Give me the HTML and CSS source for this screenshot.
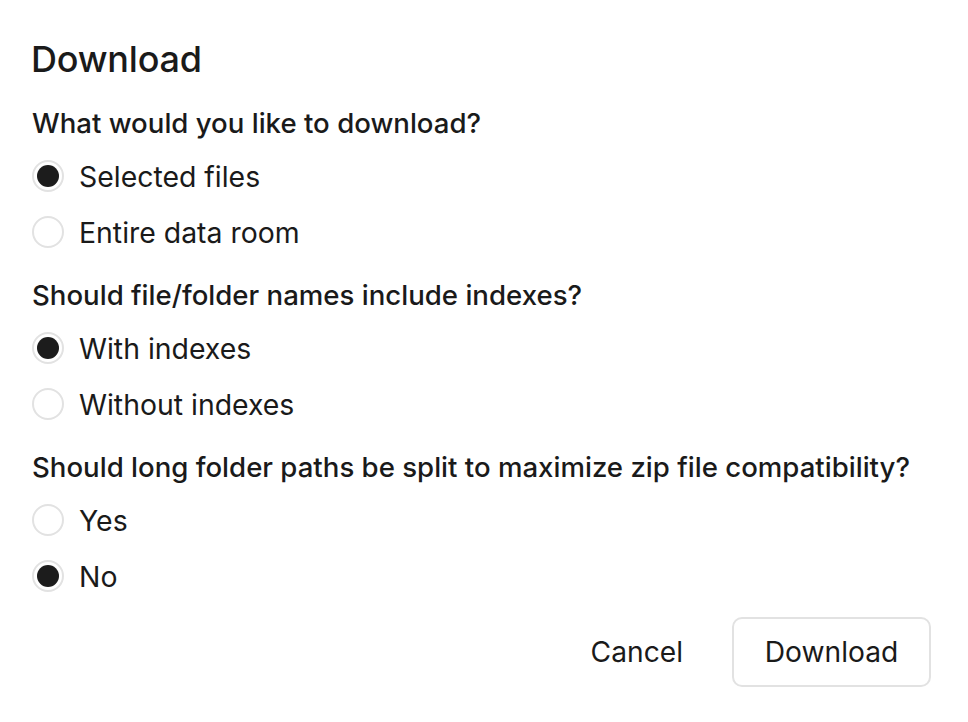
FILE: index.html
```html
<!DOCTYPE html>
<html lang="en">
<head>
<meta charset="utf-8">
<title>Download</title>
<link rel="stylesheet" href="styles.css">
</head>
<body>
<div class="dialog">
  <h1 class="title">Download</h1>
  <div class="group">
    <div class="question">What would you like to download?</div>
    <label class="option"><span class="radio checked"></span><span>Selected files</span></label>
    <label class="option"><span class="radio"></span><span>Entire data room</span></label>
  </div>
  <div class="group">
    <div class="question">Should file/folder names include indexes?</div>
    <label class="option"><span class="radio checked"></span><span>With indexes</span></label>
    <label class="option"><span class="radio"></span><span>Without indexes</span></label>
  </div>
  <div class="group">
    <div class="question">Should long folder paths be split to maximize zip file compatibility?</div>
    <label class="option"><span class="radio"></span><span>Yes</span></label>
    <label class="option"><span class="radio checked"></span><span>No</span></label>
  </div>
  <div class="actions">
    <button class="btn btn-text">Cancel</button>
    <button class="btn btn-outline">Download</button>
  </div>
</div>
</body>
</html>
```

FILE: styles.css
```css
* { box-sizing: border-box; }
html, body { margin: 0; padding: 0; background: #ffffff; }
body {
  font-family: "Inter", "Noto Sans", sans-serif;
  color: #1a1a1a;
}
.dialog {
  padding: 35px 37px 0 32px;
  display: flex;
  flex-direction: column;
}
.title {
  margin: 0;
  font-size: 36px;
  line-height: 48px;
  font-weight: 500;
  letter-spacing: -0.2px;
  margin-left: -1px;
}
.group {
  display: flex;
  flex-direction: column;
  margin-top: 17px;
}
.group:first-of-type { margin-top: 22px; }
.question {
  font-size: 27.6px;
  line-height: 36px;
  font-weight: 500;
  margin-bottom: 7px;
}
.option {
  height: 56px;
  display: flex;
  align-items: center;
  gap: 15px;
  font-size: 28.4px;
  font-weight: 400;
}
.radio {
  width: 32px;
  height: 32px;
  border-radius: 50%;
  border: 2px solid #e2e2e2;
  background: #fff;
  display: flex;
  align-items: center;
  justify-content: center;
  flex: none;
}
.radio.checked::after {
  content: "";
  width: 22px;
  height: 22px;
  border-radius: 50%;
  background: #1c1c1c;
}
.actions {
  display: flex;
  justify-content: flex-end;
  align-items: center;
  gap: 25px;
  margin-top: 13px;
}
.btn {
  font-family: inherit;
  font-size: 28.2px;
  font-weight: 400;
  color: #1a1a1a;
  background: #fff;
  height: 70px;
  border-radius: 10px;
  cursor: pointer;
}
.btn-text {
  border: none;
  padding: 0 24px;
}
.btn-outline {
  border: 2px solid #e2e2e2;
  width: 199px;
  padding: 0;
}
```
